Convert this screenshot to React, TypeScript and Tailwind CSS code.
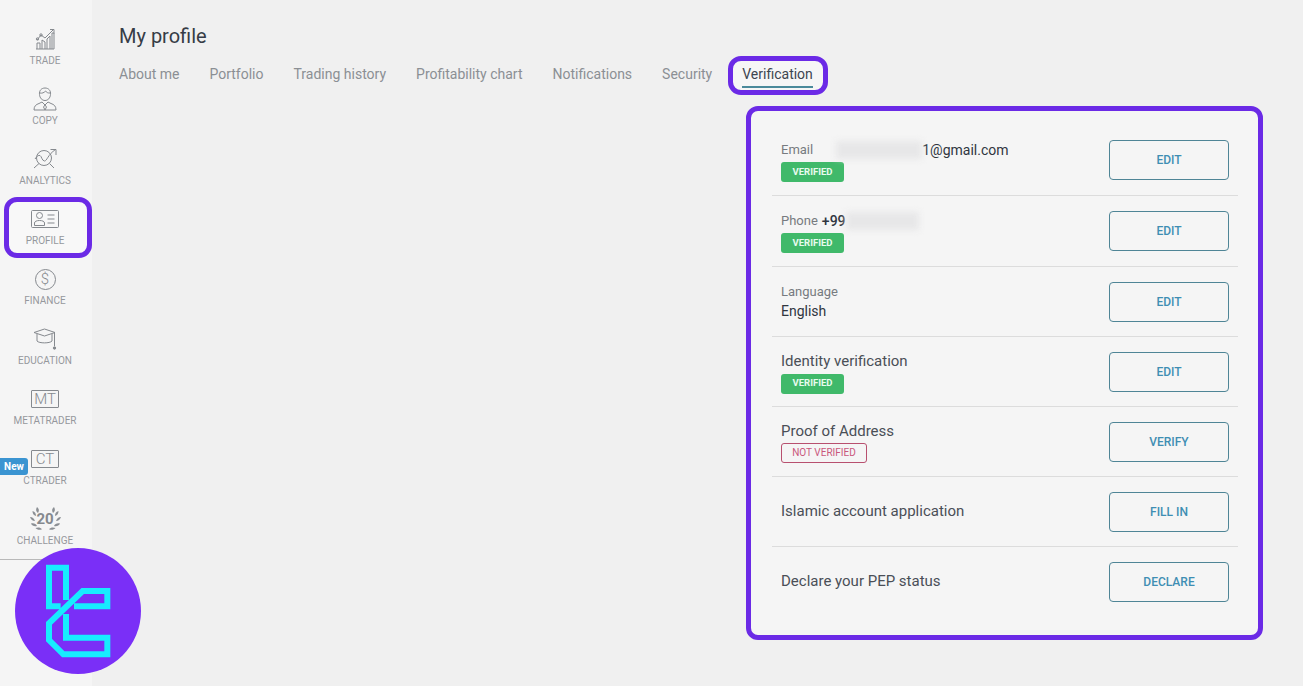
const iconStroke = '#85898e';

function TradeIcon() {
  return (
    <svg width="20" height="22" viewBox="0 0 20 22" fill="none" stroke={iconStroke} strokeWidth="1">
      <path d="M1 21h18" />
      <path d="M2 21v-6h3v6M7 21v-9l3 2v7M12 21V11l3-3v13M17 21V5h2v16" />
      <path d="M2 12l4-5 4 3 8-8" />
      <path d="M15 1.500h4v4" />
      <circle cx="2.500" cy="11" r="1.200" />
      <circle cx="6" cy="7" r="1.200" />
    </svg>
  );
}

function CopyIcon() {
  return (
    <svg width="24" height="24" viewBox="0 0 24 24" fill="none" stroke={iconStroke} strokeWidth="1">
      <path d="M6.500 7.500C6 3.500 8.500 1 12 1s6 2.500 5.500 6.500c-.3 3.500-2.500 6-5.500 6s-5.200-2.500-5.500-6z" />
      <path d="M7 6c2 .5 4-.2 5.500-2 1 1.500 2.500 2.200 4.500 2" />
      <path d="M1 23c0-4 2-5.500 5-6.500l3-1.500 3 3 3-3 3 1.500c3 1 5 2.500 5 6.500z" />
      <path d="M12 18l-1.500 2 1.500 3 1.500-3z" />
    </svg>
  );
}

function AnalyticsIcon() {
  return (
    <svg width="24" height="22" viewBox="0 0 24 22" fill="none" stroke={iconStroke} strokeWidth="1">
      <circle cx="11" cy="10" r="7.500" />
      <path d="M6 15.500L1 20M16.500 15.500L21 20" />
      <path d="M2 11c2-3 3.500-4 5-3.500s2 5.500 4.500 5.500 3-6 11-11.500" />
      <path d="M17.500 1.500H23V7" />
    </svg>
  );
}

function ProfileIcon() {
  return (
    <svg width="28" height="18" viewBox="0 0 28 18" fill="none" stroke={iconStroke} strokeWidth="1">
      <rect x="0.500" y="0.500" width="27" height="17" rx="1" />
      <circle cx="8.500" cy="5.500" r="3" />
      <path d="M3.500 15.500v-2.500c0-1.500 2-2.500 5-2.500s5 1 5 2.500v2.500z" />
      <path d="M16.500 5h7M16.500 9h7M16.500 13h7" />
    </svg>
  );
}

function EducationIcon() {
  return (
    <svg width="24" height="24" viewBox="0 0 24 24" fill="none" stroke={iconStroke} strokeWidth="1">
      <path d="M1 5.500L11.500 2 22 5.500 11.500 9z" />
      <path d="M4 7v7c2 2.500 13 2.500 15 0V7" />
      <path d="M21.500 6v13" />
      <circle cx="21.500" cy="21" r="1.200" fill={iconStroke} />
    </svg>
  );
}

function Laurel() {
  return (
    <svg width="31" height="24" viewBox="0 0 31 24" fill="#8b8f94" className="absolute left-0 top-0">
      <path d="M7 0c2 1.500 2.500 3.500 1 6-2-1.500-2.500-3.500-1-6zM2.500 4c2.500.5 3.500 2.500 3.500 5-2.500-.5-3.500-2.500-3.500-5zM0 10c2.500 0 4 1.500 5 4-2.500 0-4-1.500-5-4zM1 16.500c2.500-.8 5 .2 6 2.500-2.500.8-5-.2-6-2.500zM5.500 21c2.500-1.200 5-.6 6.500 1.200-2.500 1.200-5 .6-6.500-1.200z" />
      <path d="M24 0c-2 1.500-2.500 3.500-1 6 2-1.500 2.500-3.500 1-6zM28.500 4c-2.500.5-3.500 2.500-3.500 5 2.500-.5 3.500-2.500 3.500-5zM31 10c-2.500 0-4 1.500-5 4 2.500 0 4-1.500 5-4zM30 16.500c-2.500-.8-5 .2-6 2.500 2.500.8 5-.2 6-2.500zM25.500 21c-2.500-1.200-5-.6-6.500 1.200 2.500 1.200 5 .6 6.500-1.200z" />
    </svg>
  );
}

const boxIcon = 'flex h-[18px] w-[28px] items-center justify-center rounded-[1px] border border-[#85898e] text-[15px] font-light leading-none text-[#85898e]';

const navItems = [
  { label: 'TRADE', icon: <TradeIcon /> },
  { label: 'COPY', icon: <CopyIcon /> },
  { label: 'ANALYTICS', icon: <AnalyticsIcon /> },
  { label: 'PROFILE', icon: <ProfileIcon />, active: true },
  {
    label: 'FINANCE',
    icon: (
      <span className="flex h-[21px] w-[21px] items-center justify-center rounded-full border border-[#85898e] text-[15px] font-light leading-none text-[#85898e]">$</span>
    ),
  },
  { label: 'EDUCATION', icon: <EducationIcon /> },
  { label: 'METATRADER', icon: <span className={boxIcon}>MT</span> },
  { label: 'CTRADER', icon: <span className={boxIcon}>CT</span>, badge: true },
  {
    label: 'CHALLENGE',
    icon: (
      <span className="relative flex h-[24px] w-[31px] items-center justify-center text-[15px] font-bold leading-none text-[#85898e]">
        <Laurel />
        20
      </span>
    ),
  },
];

const tabs = ['About me', 'Portfolio', 'Trading history', 'Profitability chart', 'Notifications', 'Security'];

function Verified() {
  return (
    <span className="flex h-5 w-[63px] items-center justify-center rounded-[3px] bg-[#40b96a] text-[9.5px] font-bold text-[#e8fbef]">VERIFIED</span>
  );
}

function NotVerified() {
  return (
    <span className="flex h-5 w-[86px] items-center justify-center rounded-[3px] border border-[#b8506f] text-[10px] text-[#c9577c]">NOT VERIFIED</span>
  );
}

function Row({ action, last, children }: { action: string; last?: boolean; children: React.ReactNode }) {
  return (
    <div className={`flex h-[70px] items-center justify-between px-[9px] [&:nth-child(-n+2)]:h-[71px] ${last ? '' : 'border-b border-[#dcdcdc]'}`}>
      <div className="min-w-0">{children}</div>
      <button className="h-10 w-[120px] rounded-[4px] border border-[#4f8596] text-[12px] font-medium text-[#3f8eb3]">{action}</button>
    </div>
  );
}

export default function App() {
  return (
    <div className="relative flex h-[686px] w-full overflow-hidden bg-[#f0f0f0] font-['Roboto',sans-serif]">
      <aside className="w-[92px] shrink-0 bg-[#f5f5f5]">
        <nav className="border-b border-[#b9b9b9] pt-[27px]">
          {navItems.map((item) => (
            <div key={item.label} className="relative flex flex-col items-center pb-5 pr-[2px] last:pb-3">
              {item.active && (
                <div className="absolute left-1 top-[-10px] h-[61px] w-[88px] rounded-[13px] border-[5px] border-[#6b2ae6] bg-[#f8f8f8]" />
              )}
              {item.badge && (
                <div className="absolute left-0 top-[11px] z-10 flex h-[17px] w-[28px] items-center justify-center rounded-r-[3px] bg-[#3a94d1] text-[10px] font-bold text-white">New</div>
              )}
              <div className="relative flex h-6 items-center justify-center">{item.icon}</div>
              <div className="relative mt-1 text-[10px] leading-3 text-[#95989d]">{item.label}</div>
            </div>
          ))}
        </nav>
      </aside>

      <main className="flex min-w-0 flex-1 flex-col pl-[27px] pr-10">
        <h1 className="mt-[24px] text-[20px] leading-6 text-[#363c46]">My profile</h1>
        <div className="mt-[17px] flex items-center gap-[30px] text-[14px] leading-[18px] text-[#8b8f94]">
          {tabs.map((tab) => (
            <span key={tab}>{tab}</span>
          ))}
          <span className="relative text-[#3d4550]">
            <span className="absolute bottom-[-12px] left-[-14px] right-[-15px] top-[-9px] rounded-[13px] border-[5px] border-[#6b2ae6] bg-[#f6f6f6]" />
            <span className="relative">Verification</span>
            <span className="absolute bottom-[-5px] left-0 right-0 h-[2px] bg-[#4a8a9b]" />
          </span>
        </div>

        <section className="mt-[23px] w-[517px] self-end rounded-[12px] border-[5px] border-[#6b2ae6] bg-[#f5f5f5] pl-[21px] pr-5 pt-[14px]">
          <Row action="EDIT">
            <div className="pt-[2px]">
              <div className="flex items-center text-[14px] leading-[20px] text-[#30363f]">
                <span className="text-[13px] text-[#777b80]">Email</span>
                <span className="ml-[23px] h-[18px] w-[86px] bg-[#e7e7e8] blur-[3px]" />
                <span>1@gmail.com</span>
              </div>
              <div className="mt-[2px]"><Verified /></div>
            </div>
          </Row>
          <Row action="EDIT">
            <div className="pt-[2px]">
              <div className="flex items-center text-[14px] leading-[20px] text-[#30363f]">
                <span className="text-[13px] text-[#777b80]">Phone</span>
                <span className="ml-[4px] font-medium">+99</span>
                <span className="h-[18px] w-[73px] bg-[#e7e7e8] blur-[3px]" />
              </div>
              <div className="mt-[2px]"><Verified /></div>
            </div>
          </Row>
          <Row action="EDIT">
            <div className="text-[13px] leading-[20px] text-[#777b80]">Language</div>
            <div className="text-[14px] leading-[19px] text-[#30363f]">English</div>
          </Row>
          <Row action="EDIT">
            <div className="pt-px">
              <div className="text-[15px] leading-[20px] text-[#4a4f57]">Identity verification</div>
              <div className="mt-[3px]"><Verified /></div>
            </div>
          </Row>
          <Row action="VERIFY">
            <div className="text-[15px] leading-[20px] text-[#4a4f57]">Proof of Address</div>
            <div className="mt-[2px]"><NotVerified /></div>
          </Row>
          <Row action="FILL IN">
            <div className="pb-[2px] text-[15px] leading-[20px] text-[#4a4f57]">Islamic account application</div>
          </Row>
          <Row action="DECLARE" last>
            <div className="pb-[2px] text-[15px] leading-[20px] text-[#4a4f57]">Declare your PEP status</div>
          </Row>
          <div className="h-[18px]" />
        </section>
      </main>

      <svg width="126" height="126" viewBox="45 24 378 378" className="absolute left-[15px] top-[548px]" fill="none">
        <circle cx="234" cy="213" r="189" fill="#7a2ff7" />
        <path
          d="M182 199H147V83H198V180M222 199H322V153H248L147 250V300L190 343H322V293H198V222"
          stroke="#17ecff"
          strokeWidth="18"
        />
      </svg>
    </div>
  );
}
